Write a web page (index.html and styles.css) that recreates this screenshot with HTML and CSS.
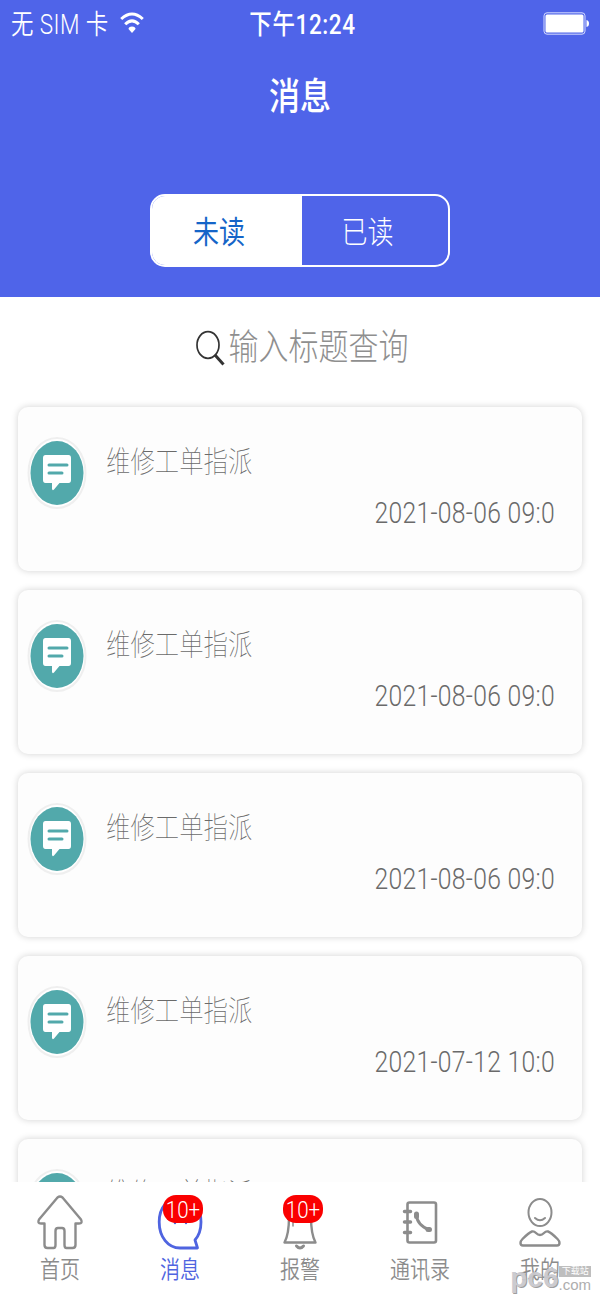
FILE: index.html
```html
<!DOCTYPE html>
<html lang="zh-CN">

<head>
    <meta charset="utf-8">
    <title>消息</title>
    <link rel="stylesheet" href="styles.css">
</head>

<body>
    <svg class="sprite" width="0" height="0">
        <symbol id="chat" viewBox="0 0 60 72" preserveAspectRatio="none">
            <ellipse cx="30" cy="36" rx="28.5" ry="35" fill="#fff" stroke="#efefef" stroke-width="2" />
            <ellipse cx="30" cy="36" rx="26.5" ry="32" fill="#52a9ab" />
            <path d="M18.500 18h23q2.500 0 2.500 3v22q0 3-2.500 3h-9l-5.500 6.500q-1.500 1.500-2-.5v-6h-6.500q-2.500 0-2.500-3V21q0-3 2.500-3z" fill="#fff" />
            <path d="M22 28h18M22 36h13" stroke="#52a9ab" stroke-width="3" stroke-linecap="round" />
        </symbol>
    </svg>

    <div class="phone">
        <header class="header">
            <div class="status">
                <div class="carrier">
                    <span class="tall">无 SIM 卡</span>
                    <svg width="24" height="22" viewBox="0 0 24 22" fill="none" stroke="#fff" stroke-width="3">
                        <path d="M1.200 7Q12-3 22.800 7M5.200 12.300q6.800-6.800 13.600 0" />
                        <path d="M12 21l-3.500-4q0-2.500 3.500-2.500t3.500 2.500z" fill="#fff" stroke="none" />
                    </svg>
                </div>
                <div class="time tall">下午12:24</div>
                <svg class="battery" width="47" height="23" viewBox="0 0 47 23">
                    <rect x="1" y=".8" width="41" height="21.4" rx="3" fill="none" stroke="#d5daff" stroke-width="1" />
                    <rect x="2.5" y="2.5" width="38" height="18" rx="1.5" fill="#fff" />
                    <path d="M43.500 8q2.500.5 2.500 3.500t-2.500 3.500z" fill="#fff" />
                </svg>
            </div>
            <h1 class="title"><span class="tall">消息</span></h1>
            <div class="switch">
                <div class="option active"><span class="tall">未读</span></div>
                <div class="option"><span class="tall">已读</span></div>
            </div>
        </header>

        <main class="content">
            <div class="search">
                <svg width="32" height="36" viewBox="0 0 32 36" fill="none" stroke="#333">
                    <ellipse cx="13" cy="15" rx="11" ry="13.3" stroke-width="1.7" />
                    <path d="M20 25l8.500 9.500" stroke-width="3" />
                </svg>
                <span class="tall">输入标题查询</span>
            </div>

            <div class="list">
                <div class="card">
                    <svg class="avatar"><use href="#chat" /></svg>
                    <div class="info">
                        <div class="name tall">维修工单指派</div>
                        <div class="date tall">2021-08-06 09:0</div>
                    </div>
                </div>
                <div class="card">
                    <svg class="avatar"><use href="#chat" /></svg>
                    <div class="info">
                        <div class="name tall">维修工单指派</div>
                        <div class="date tall">2021-08-06 09:0</div>
                    </div>
                </div>
                <div class="card">
                    <svg class="avatar"><use href="#chat" /></svg>
                    <div class="info">
                        <div class="name tall">维修工单指派</div>
                        <div class="date tall">2021-08-06 09:0</div>
                    </div>
                </div>
                <div class="card">
                    <svg class="avatar"><use href="#chat" /></svg>
                    <div class="info">
                        <div class="name tall">维修工单指派</div>
                        <div class="date tall">2021-07-12 10:0</div>
                    </div>
                </div>
                <div class="card">
                    <svg class="avatar"><use href="#chat" /></svg>
                    <div class="info">
                        <div class="name tall">维修工单指派</div>
                    </div>
                </div>
            </div>
        </main>

        <nav class="tabs">
            <div class="tab">
                <svg class="icon" viewBox="0 0 60 60">
                    <path d="M27.500 5.500q2.500-2 5 0L51 27.500q2 4-2 4h-3.500V53q0 3-3 3h-6q-2 0-2-3V39q0-3-2.500-3h-4q-2.500 0-2.500 3v14q0 3-2 3h-6q-3 0-3-3V31.500H11q-4 0-2-4z" />
                </svg>
                <span class="label tall">首页</span>
            </div>
            <div class="tab active">
                <svg class="icon" viewBox="0 0 60 60">
                    <path d="M30 5.500c12 0 21 10 21 24.500 0 8-2.500 14-6 18l2.500 8H30C18 56 9.200 45 9.200 30S18 5.500 30 5.500z" stroke-width="2.800" />
                    <path d="M25 29.500v1.500M36 29.500v1.500" />
                </svg>
                <span class="badge"><span class="tall">10+</span></span>
                <span class="label tall">消息</span>
            </div>
            <div class="tab">
                <svg class="icon" viewBox="0 0 60 60">
                    <path d="M19 25c0 13-1 19-4.500 25.500h31C42 44 41 38 41 25" />
                    <path d="M23 29v5" stroke-width="1.500" />
                    <path d="M26.500 54q3.500 4 7 0" stroke-width="3" />
                </svg>
                <span class="badge"><span class="tall">10+</span></span>
                <span class="label tall">报警</span>
            </div>
            <div class="tab">
                <svg class="icon" viewBox="0 0 60 60">
                    <rect x="17.500" y="10.500" width="28.500" height="40" rx="2" stroke-width="2.600" />
                    <path d="M14.500 19.500h6M14.500 30h6M14.500 40.500h6" stroke-width="3.500" />
                    <path d="M26.500 22q0 11 13 16" stroke-width="3" />
                    <path d="M26.500 22v2.500M38 37.500h1.500" stroke-width="5" />
                </svg>
                <span class="label tall">通讯录</span>
            </div>
            <div class="tab">
                <svg class="icon" viewBox="0 0 60 60">
                    <ellipse cx="30" cy="20.500" rx="11.500" ry="13.500" stroke-width="2" />
                    <path d="M25 26q5 4.500 10 0" stroke-width="2" />
                    <path d="M22 39.500q2-.5 4 1.500 4 4 8 0 2-2 4-1.500 3 1 9.500 7.500 2 2 2 4 0 2.500-2.500 2.500h-34q-2.500 0-2.500-2.500 0-2 2-4 6.500-6.500 9.500-7.500z" />
                </svg>
                <span class="label tall">我的</span>
            </div>
        </nav>

        <div class="watermark">
            <span class="brand">pc6</span>
            <div class="site">
                <span class="tag">下载站</span>
                <span class="com">.com</span>
            </div>
        </div>
    </div>
</body>

</html>
```
FILE: styles.css
```css
body {
    margin: 0;
    background: #fff;
    font-family: "Liberation Sans", "Noto Sans CJK SC", sans-serif;
}

.sprite {
    position: absolute;
}

.phone {
    position: relative;
    display: flex;
    flex-direction: column;
    width: 600px;
    height: 1298px;
    overflow: hidden;
}

/* the whole screen uses tall, narrow lettering */
.tall {
    display: inline-block;
    white-space: nowrap;
    transform: scaleY(1.2);
}

.header {
    flex: none;
    height: 297px;
    background: #4f64e9;
    color: #fff;
}

.status {
    display: grid;
    grid-template-columns: 1fr auto 1fr;
    align-items: center;
    height: 47px;
    padding: 0 10px 0 11px;
    font-size: 22.5px;
    line-height: 30px;
}

.carrier {
    display: flex;
    align-items: center;
    gap: 11px;
    font-family: Roboto, "Noto Sans CJK SC", sans-serif;
    font-weight: 350;
    letter-spacing: 0.4px;
}

.carrier svg {
    margin-top: -2px;
}

.time {
    padding-left: 4px;
    font-family: Roboto, "Noto Sans CJK SC", sans-serif;
    font-weight: 500;
    letter-spacing: 0.6px;
}

.battery {
    justify-self: end;
}

.title {
    margin: 0;
    padding-top: 28px;
    font-size: 31px;
    font-weight: 500;
    line-height: 46px;
    text-align: center;
}

.switch {
    display: flex;
    box-sizing: border-box;
    width: 300px;
    height: 73px;
    margin: 73px auto 0;
    border: 2px solid #fff;
    border-radius: 15px;
    overflow: hidden;
}

.option {
    flex: 1;
    box-sizing: border-box;
    padding-right: 15px;
    font-size: 26px;
    font-weight: 300;
    line-height: 73px;
    text-align: center;
}

.option.active {
    flex: none;
    width: 150px;
    padding-right: 16px;
    background: #fff;
    color: #1565c8;
    font-weight: 400;
}

.content {
    flex: 1;
    min-height: 0;
    overflow: hidden;
}

.search {
    display: flex;
    align-items: center;
    justify-content: center;
    gap: 2px;
    height: 102px;
    padding-left: 3px;
    color: #8f8f8f;
    font-size: 30px;
    font-weight: 300;
    line-height: 42px;
}

.list {
    display: flex;
    flex-direction: column;
    gap: 19px;
    padding: 8px 18px 0;
}

.card {
    display: flex;
    flex: none;
    gap: 19px;
    box-sizing: border-box;
    height: 164px;
    padding: 30px 27px 0 9px;
    border-radius: 10px;
    background: #fdfdfd;
    box-shadow: 0 0 7px rgba(0, 0, 0, 0.18);
}

.avatar {
    flex: none;
    width: 60px;
    height: 72px;
}

.info {
    display: flex;
    flex: 1;
    flex-direction: column;
    color: #6a6a6a;
}

.name {
    align-self: flex-start;
    font-size: 24.4px;
    font-weight: 100;
    line-height: 49px;
}

.date {
    align-self: flex-end;
    margin-top: 4px;
    font-family: Roboto, sans-serif;
    font-size: 24.7px;
    font-weight: 300;
    letter-spacing: 0.3px;
    line-height: 46px;
}

.tabs {
    display: flex;
    flex: none;
    height: 116px;
    background: #fff;
}

.tab {
    position: relative;
    display: flex;
    flex: 1;
    flex-direction: column;
    align-items: center;
    padding-top: 10px;
    color: #8c8c8c;
}

.tab.active {
    color: #4f64e0;
}

.icon {
    width: 60px;
    height: 60px;
    fill: none;
    stroke: currentColor;
    stroke-width: 2.4;
    stroke-linecap: round;
    stroke-linejoin: round;
}

.label {
    font-size: 20px;
    font-weight: 350;
    line-height: 37px;
}

.badge {
    position: absolute;
    top: 13px;
    left: 43px;
    width: 40px;
    height: 28px;
    border-radius: 13px;
    background: #fa0000;
    color: #fff;
    font-family: Roboto, sans-serif;
    font-size: 20.5px;
    font-weight: 300;
    line-height: 30px;
    text-align: center;
}

.watermark {
    position: absolute;
    right: 9px;
    bottom: 6px;
    display: flex;
    color: #aaa;
    opacity: 0.95;
}

.brand {
    color: #c9c9ce;
    font-size: 28px;
    font-weight: bold;
    line-height: 23px;
    text-shadow: 1px 1px 0 #999;
}

.site {
    display: flex;
    flex-direction: column;
}

.tag {
    margin-left: 1px;
    background: #bbb;
    color: #fff;
    font-size: 9px;
    line-height: 11px;
    text-align: center;
}

.com {
    font-size: 15px;
    line-height: 15px;
}
```
